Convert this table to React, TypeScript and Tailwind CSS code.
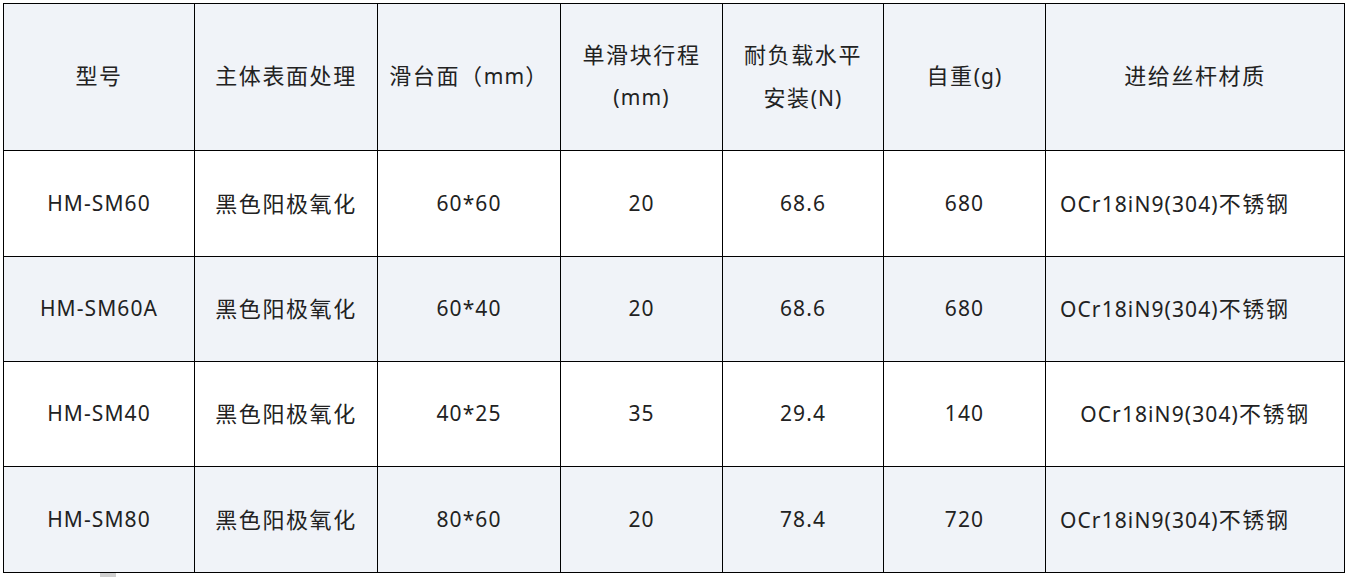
import React from "react";

type Row = {
  model: string;
  finish: string;
  size: string;
  stroke: string;
  load: string;
  weight: string;
  material: string;
  centerMaterial?: boolean;
  shaded?: boolean;
};

const rows: Row[] = [
  { model: "HM-SM60", finish: "黑色阳极氧化", size: "60*60", stroke: "20", load: "68.6", weight: "680", material: "OCr18iN9(304)不锈钢" },
  { model: "HM-SM60A", finish: "黑色阳极氧化", size: "60*40", stroke: "20", load: "68.6", weight: "680", material: "OCr18iN9(304)不锈钢", shaded: true },
  { model: "HM-SM40", finish: "黑色阳极氧化", size: "40*25", stroke: "35", load: "29.4", weight: "140", material: "OCr18iN9(304)不锈钢", centerMaterial: true },
  { model: "HM-SM80", finish: "黑色阳极氧化", size: "80*60", stroke: "20", load: "78.4", weight: "720", material: "OCr18iN9(304)不锈钢", shaded: true },
];

// CJK runs are set a bit larger and wider than the latin text
const T = ({ s }: { s: string }) => (
  <>
    {s.split(/([\u3000-\u9fff\uff00-\uffef]+)/).map((part, i) =>
      /[\u3000-\u9fff\uff00-\uffef]/.test(part) ? (
        <span key={i} className="text-[22px] tracking-[1.6px]">
          {part}
        </span>
      ) : (
        <span key={i}>{part}</span>
      )
    )}
  </>
);

const cell = "border border-black text-center align-middle p-0";

export default function App() {
  return (
    <div className="bg-white w-[1350px] h-[577px] overflow-hidden pt-[3px] pl-[3px] font-['Noto_Sans','Noto_Sans_CJK_SC',sans-serif] text-[21px] tracking-[1.1px] text-[#222]">
      <table className="border-collapse table-fixed w-[1341px]">
        <colgroup>
          <col className="w-[191px]" />
          <col className="w-[183px]" />
          <col className="w-[183px]" />
          <col className="w-[162px]" />
          <col className="w-[161px]" />
          <col className="w-[162px]" />
          <col className="w-[299px]" />
        </colgroup>
        <thead>
          <tr className="h-[147px] bg-[#f0f3f8]">
            <th className={`${cell} font-normal pb-[3px]`}><T s="型号" /></th>
            <th className={`${cell} font-normal pb-[3px]`}><T s="主体表面处理" /></th>
            <th className={`${cell} font-normal pb-[3px]`}><T s="滑台面（mm）" /></th>
            <th className={`${cell} font-normal leading-[42px] pb-[3px]`}>
              <T s="单滑块行程" />
              <br />
              (mm)
            </th>
            <th className={`${cell} font-normal leading-[42px] pb-[3px]`}>
              <T s="耐负载水平" />
              <br />
              <T s="安装(N)" />
            </th>
            <th className={`${cell} font-normal pb-[3px]`}><T s="自重(g)" /></th>
            <th className={`${cell} font-normal pb-[3px]`}><T s="进给丝杆材质" /></th>
          </tr>
        </thead>
        <tbody>
          {rows.map((r, i) => (
            <tr
              key={r.model}
              className={`${i === 0 || i === 3 ? "h-[106px]" : "h-[105px]"} ${r.shaded ? "bg-[#f0f3f8]" : "bg-white"}`}
            >
              <td className={cell}>{r.model}</td>
              <td className={cell}><T s={r.finish} /></td>
              <td className={cell}>{r.size}</td>
              <td className={cell}>{r.stroke}</td>
              <td className={cell}>{r.load}</td>
              <td className={cell}>{r.weight}</td>
              <td className={`${cell} ${r.centerMaterial ? "" : "!text-left pl-[14px]"}`}>
                <T s={r.material} />
              </td>
            </tr>
          ))}
        </tbody>
      </table>
      <div className="ml-[97px] w-[16px] h-[6px] bg-[#cfcfcf]" />
    </div>
  );
}
